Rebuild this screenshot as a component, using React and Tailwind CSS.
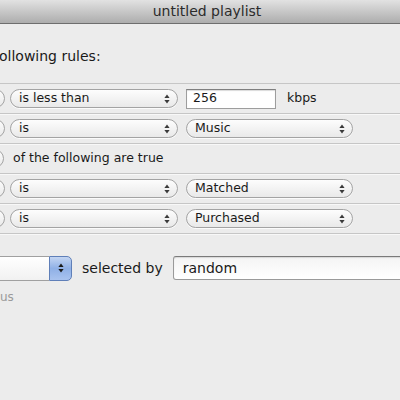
import React from 'react';

const font = { fontFamily: '"DejaVu Sans", "Liberation Sans", sans-serif' };

function Arrows({ className = 'text-[#3a3a3a]' }) {
  return (
    <svg width="6" height="10" viewBox="0 0 6 10" className={className}>
      <path d="M3 0.5 L5.6 4 H0.4 Z" fill="currentColor" />
      <path d="M3 9.5 L5.6 6 H0.4 Z" fill="currentColor" />
    </svg>
  );
}

function Popup({ label, w }) {
  return (
    <div
      className={`${w} h-[19px] shrink-0 rounded-full border border-[#a3a3a3] bg-gradient-to-b from-[#fdfdfd] to-[#e9e9e9] shadow-[0_1px_0_rgba(255,255,255,.8)] flex items-center justify-between pl-[8px] pr-[7px]`}
    >
      <span className="text-[12.5px] leading-none text-[#1a1a1a]">{label}</span>
      <Arrows />
    </div>
  );
}

function Stub() {
  return (
    <div className="-ml-[16px] w-[21px] h-[19px] shrink-0 rounded-full border border-[#a3a3a3] bg-gradient-to-b from-[#fdfdfd] to-[#e9e9e9]" />
  );
}

function Row({ children }) {
  return (
    <div className="h-[30px] flex items-center border-b border-[#c6c6c6] shadow-[0_1px_0_#f8f8f8]">
      {children}
    </div>
  );
}

export default function App() {
  return (
    <div className="w-[400px] h-[400px] overflow-hidden bg-[#ececec]" style={font}>
      <div className="h-[24px] bg-gradient-to-b from-[#e2e2e2] to-[#adadad] border-b border-[#6e6e6e] flex items-center justify-center pl-[14px]">
        <span className="text-[14px] text-[#2b2b2b]">untitled playlist</span>
      </div>

      <div className="mt-[23px] h-[18px] flex items-center text-[14px] text-[#1a1a1a]">
        <span className="-ml-[1px]">ollowing rules:</span>
      </div>

      <div className="mt-[18px] border-t border-[#c6c6c6]">
        <Row>
          <Stub />
          <div className="ml-[5px]"><Popup label="is less than" w="w-[168px]" /></div>
          <div className="ml-[8px] w-[90px] h-[20px] border border-[#9d9d9d] border-t-[#7f7f7f] bg-white shadow-[inset_0_1px_1px_rgba(0,0,0,.15)] flex items-center pl-[6px]">
            <span className="text-[12.5px] text-[#1a1a1a]">256</span>
          </div>
          <span className="ml-[11px] text-[12.5px] text-[#1a1a1a]">kbps</span>
        </Row>
        <Row>
          <Stub />
          <div className="ml-[5px]"><Popup label="is" w="w-[168px]" /></div>
          <div className="ml-[8px]"><Popup label="Music" w="w-[167px]" /></div>
        </Row>
        <Row>
          <div className="-ml-[17px] w-[21px] h-[19px] shrink-0 rounded-full border border-[#a3a3a3] bg-gradient-to-b from-[#fdfdfd] to-[#e9e9e9]" />
          <span className="ml-[9px] text-[12.5px] text-[#1a1a1a]">of the following are true</span>
        </Row>
        <Row>
          <Stub />
          <div className="ml-[5px]"><Popup label="is" w="w-[168px]" /></div>
          <div className="ml-[8px]"><Popup label="Matched" w="w-[167px]" /></div>
        </Row>
        <Row>
          <Stub />
          <div className="ml-[5px]"><Popup label="is" w="w-[168px]" /></div>
          <div className="ml-[8px]"><Popup label="Purchased" w="w-[167px]" /></div>
        </Row>
      </div>

      <div className="mt-[21px] flex items-center h-[26px]">
        <div className="flex items-stretch h-[25px]">
          <div className="w-[49px] border-y border-[#a0a0a0] bg-gradient-to-b from-white to-[#f1f1f1]" />
          <div className="w-[23px] rounded-r-[5px] border border-[#5f7fb8] bg-gradient-to-b from-[#c3d5f2] via-[#8fb0e6] to-[#a9c3ef] flex items-center justify-center">
            <Arrows className="text-[#1a1a1a]" />
          </div>
        </div>
        <span className="ml-[10px] text-[14px] text-[#1a1a1a]">selected by</span>
        <div className="ml-[10px] flex-1 -mr-[10px] h-[24px] rounded-[3px] border border-[#9a9a9a] border-t-[#7a7a7a] bg-gradient-to-b from-[#f4f4f4] to-white shadow-[inset_0_1px_1px_rgba(0,0,0,.12)] flex items-center pl-[9px]">
          <span className="text-[14px] text-[#1a1a1a]">random</span>
        </div>
      </div>

      <div className="mt-[8px] h-[16px] flex items-center">
        <span className="text-[12px] text-[#9a9a9a]">us</span>
      </div>
    </div>
  );
}
